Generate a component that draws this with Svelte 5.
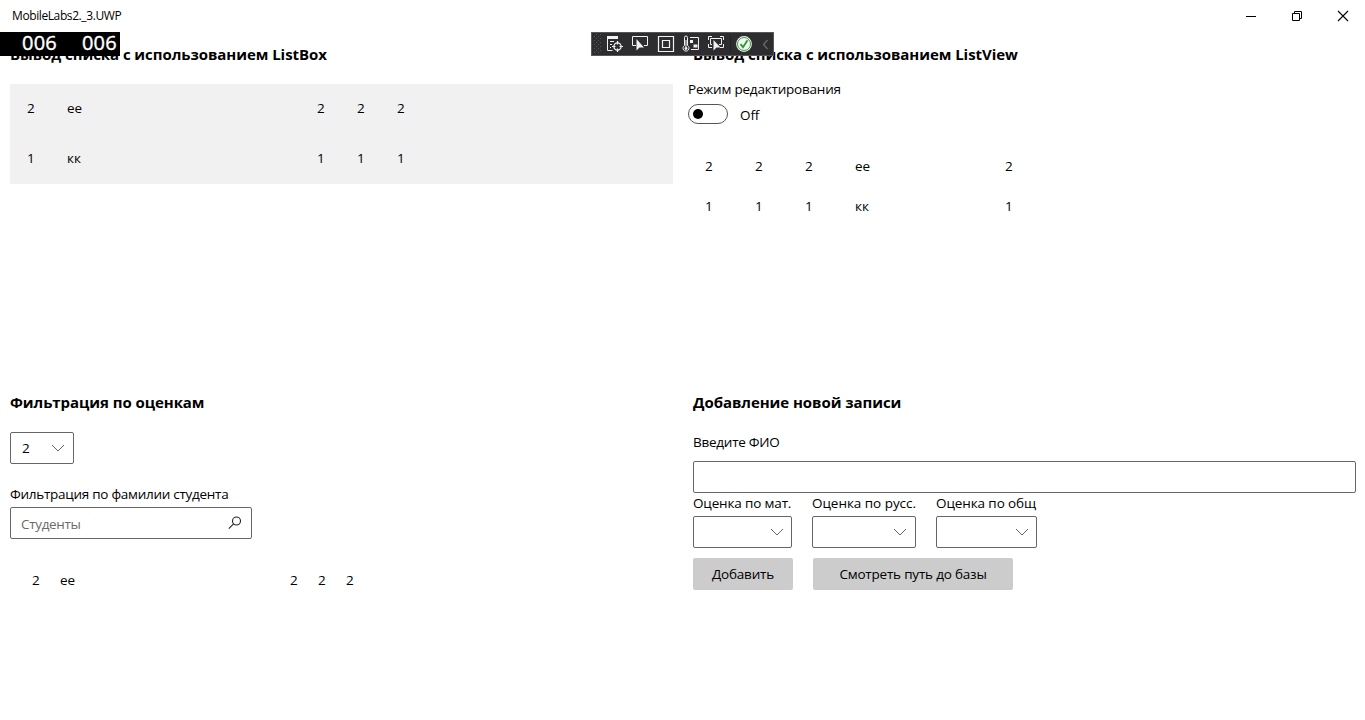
<script>
  const boxRows = [['2', 'ее', '2', '2', '2'], ['1', 'кк', '1', '1', '1']];
  const viewRows = [['2', '2', '2', 'ее', '2'], ['1', '1', '1', 'кк', '1']];
  const filtered = [['2', 'ее', '2', '2', '2']];
  const marks = [
    { label: 'Оценка по мат.', kind: 'math' },
    { label: 'Оценка по русс.', kind: 'rus' },
    { label: 'Оценка по общ', kind: 'soc' }
  ];
</script>

{#snippet chevron()}
  <svg class="chev" width="14" height="8" viewBox="0 0 14 8" fill="none" stroke="#666" stroke-width="1"><path d="M1 1l6 6 6-6" /></svg>
{/snippet}

<div class="window">
  <header>
    <span class="title">MobileLabs2._3.UWP</span>
    <div class="controls">
      <svg width="46" height="32" viewBox="0 0 46 32"><path d="M18 16.5h10" stroke="#000" /></svg>
      <svg width="46" height="32" viewBox="0 0 46 32" fill="none" stroke="#000"><path d="M18.5 13.5h7v7h-7zM20.500 13.500v-2h7v7h-2" /></svg>
      <svg width="46" height="32" viewBox="0 0 46 32"><path d="M18 11l10 10M28 11l-10 10" stroke="#000" stroke-width="1.1" /></svg>
    </div>
  </header>

  <main>
    <section class="top left">
      <h2><span>Вывод списка с использованием ListBox</span></h2>
      <div class="listbox">
        {#each boxRows as row}
          <div class="row">{#each row as cell}<span>{cell}</span>{/each}</div>
        {/each}
      </div>
    </section>

    <section class="top right">
      <h2><span>Вывод списка с использованием ListView</span></h2>
      <div class="switch-block">
        <div class="switch-label"><span class="t-mode">Режим редактирования</span></div>
        <div class="switch-line"><span class="switch"><i></i></span><span class="off">Off</span></div>
      </div>
      <div class="listview">
        {#each viewRows as row}
          <div class="row">{#each row as cell}<span>{cell}</span>{/each}</div>
        {/each}
      </div>
    </section>

    <section class="bottom left">
      <h2><span>Фильтрация по оценкам</span></h2>
      <div class="combo grade"><span>2</span>{@render chevron()}</div>
      <div class="label name-label"><span class="t-name">Фильтрация по фамилии студента</span></div>
      <div class="search">
        <span class="t-ph">Студенты</span>
        <svg width="14" height="14" viewBox="0 0 14 14" fill="none" stroke="#222" stroke-width="1.1"><circle cx="8.500" cy="5" r="4" /><path d="M5.600 7.900L.8 12.700" /></svg>
      </div>
      <div class="filtered">
        {#each filtered as row}
          <div class="row">{#each row as cell}<span>{cell}</span>{/each}</div>
        {/each}
      </div>
    </section>

    <section class="bottom right">
      <h2><span>Добавление новой записи</span></h2>
      <div class="label fio-label"><span class="t-fio">Введите ФИО</span></div>
      <div class="field"></div>
      <div class="marks">
        {#each marks as m}
          <div class="mark {m.kind}">
            <div class="label"><span>{m.label}</span></div>
            <div class="combo">{@render chevron()}</div>
          </div>
        {/each}
      </div>
      <div class="buttons">
        <button class="add"><span>Добавить</span></button>
        <button class="path"><span>Смотреть путь до базы</span></button>
      </div>
    </section>
  </main>

  <div class="counter"><span>006</span><span>006</span></div>

  <div class="toolbar">
    <svg width="183" height="24" viewBox="0 0 183 24" fill="none" stroke="#f1f1f1">
      <g fill="#55555a" stroke="none">
        {#each [4, 8, 12, 16, 20] as y}
          <rect x="3" {y} width="1" height="1" /><rect x="7" {y} width="1" height="1" />
          <rect x="5" y={y - 2} width="1" height="1" /><rect x="9" y={y - 2} width="1" height="1" />
        {/each}
      </g>
      <path d="M16 5.500h11" stroke-width="3" />
      <path d="M16.500 6v12.500h5M19 9.500h4M19 12.500h2M19 15.500h1" />
      <circle cx="26.500" cy="14.500" r="3.600" stroke-width="1.300" />
      <path d="M26.500 9v3.500M26.500 16.500V20M21 14.500h3.500M28.500 14.500H32" stroke-width="1.200" />
      <path d="M45 13.500h-3.500v-9h15v9H53" />
      <path d="M45.500 7v11.500l3-3H53z" fill="#f1f1f1" stroke="none" />
      <path d="M67.500 4.500h15v15h-15zM71.500 8.500h7v7h-7z" stroke-width="1.200" />
      <path d="M93.500 13.500v-8q0-1.500 1.500-1.500t1.500 1.500v8a3 3 0 1 1-3 0z" />
      <path d="M95 8v8" /><circle cx="95" cy="16.500" r="1.400" fill="#f1f1f1" stroke="none" />
      <path d="M99 5.500h8.500v12H100" />
      <path d="M99 8h3v3h-3zM102.500 12.500h4v3h-4z" fill="#f1f1f1" stroke="none" />
      <path d="M117.500 8V4.500h3.500M129 4.500h3.500V8M117.500 12v3.500h3.500M132.500 12v3.500h-3.500" />
      <path d="M121 12.500h-1.500v-6h11v6H128" />
      <path d="M122.500 8v10.500l3-3h4z" fill="#f1f1f1" stroke="none" />
      <path d="M139.500 3v18" stroke="#222226" />
      <circle cx="153" cy="12" r="7.900" fill="#f4f4f4" stroke="none" />
      <circle cx="153" cy="12" r="6.500" stroke="#37a537" stroke-width="1" />
      <path d="M149.500 12.200l2.500 3 4.500-7" stroke="#279c2b" stroke-width="1.800" />
      <path d="M176.500 8l-4 4.500 4 4.500" stroke="#68686c" stroke-width="1.300" />
    </svg>
  </div>
</div>

<style>
  .window { position: relative; width: 1365px; height: 720px; overflow: hidden; background: #fff; color: #000; font: 13.5px/20px "Open Sans", "Noto Sans", sans-serif; box-sizing: border-box; }
  .window * { box-sizing: border-box; }
  span { white-space: nowrap; }
  svg { display: block; flex: none; }
  header { height: 32px; display: flex; justify-content: space-between; align-items: center; padding-left: 12px; }
  .title { font-size: 12px; letter-spacing: -0.4px; }
  .controls { display: flex; margin-right: -1px; }
  main { display: grid; grid-template-columns: 683px 682px; grid-template-rows: 348px 340px; }
  section { padding: 9px 10px 10px; min-width: 0; }
  h2 { margin: 0; height: 27px; font-size: 15px; line-height: 26px; font-weight: 700; letter-spacing: -0.06px; }
  .right { padding-right: 9px; }

  .row { display: grid; align-items: center; }
  .listbox { margin-top: 16px; background: #f1f1f1; height: 100px; width: 663px; padding-left: 17px; }
  .listbox .row { height: 50px; padding-bottom: 2px; grid-template-columns: 40px 250px 40px 40px 40px; }
  .listview { margin: 19px 0 0 12px; }
  .listview .row { height: 40px; grid-template-columns: 50px 50px 50px 150px 40px; }
  .filtered { margin: 26px 0 0 22px; }
  .filtered .row { height: 30px; grid-template-columns: 28px 230px 28px 28px 28px; }

  .switch-block { margin: 11px 0 0 -5px; }
  .switch-label { height: 23px; }
  .switch-line { display: flex; align-items: center; height: 25px; }
  .switch { width: 40px; height: 20px; border: 1px solid #555; border-radius: 10px; display: flex; align-items: center; padding-left: 4px; margin-top: -1px; }
  .switch i { width: 10px; height: 10px; border-radius: 50%; background: #000; }
  .off { margin-left: 12px; letter-spacing: -0.1px; }

  .t-mode { letter-spacing: -0.2px; }
  .t-name { letter-spacing: -0.27px; }
  .t-ph { letter-spacing: -0.33px; padding-top: 2px; }
  .t-fio { letter-spacing: -0.25px; }

  .label { height: 20px; }
  .combo { height: 32px; border: 1px solid #666; border-radius: 2px; display: flex; align-items: center; justify-content: flex-end; padding-right: 7px; background: #fff; }
  .grade { width: 64px; margin-top: 16px; justify-content: space-between; padding: 0 8px 0 11px; }
  .name-label { margin-top: 20px; height: 23px; }
  .search { width: 242px; height: 32px; border: 1px solid #666; border-radius: 2px; display: flex; align-items: center; justify-content: space-between; padding: 0 9px 0 10px; color: #6b6b6b; }
  .fio-label { margin-top: 16px; height: 29px; }
  .field { height: 32px; border: 1px solid #666; border-radius: 2px; }
  .marks { display: flex; gap: 20px; }
  .mark .label { height: 23px; }
  .math { width: 99px; letter-spacing: -0.15px; }
  .rus { width: 104px; letter-spacing: -0.04px; }
  .rus .combo { padding-right: 8px; }
  .soc { width: 101px; letter-spacing: -0.1px; }
  .buttons { display: flex; gap: 20px; margin-top: 10px; }
  button { height: 32px; padding: 0; border: 0; border-radius: 2px; background: #ccc; color: #000; font: inherit; letter-spacing: -0.2px; }
  .add { width: 100px; }
  .path { width: 200px; }

  .counter { position: absolute; left: 0; top: 32px; width: 120px; height: 24px; background: #000; color: #fff; display: flex; gap: 25px; padding-left: 22px; font-size: 20px; line-height: 22px; letter-spacing: 0.2px; -webkit-text-stroke: 0.4px #fff; }
  .toolbar { position: absolute; left: 591px; top: 32px; width: 183px; height: 24px; background: #2d2d30; outline: 1px solid #55555a; outline-offset: -1px; }
</style>
